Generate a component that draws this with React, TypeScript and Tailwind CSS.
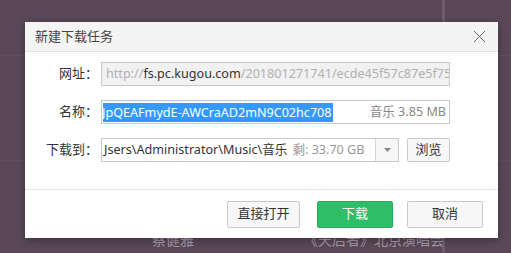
import { X } from 'lucide-react'

const font = { fontFamily: '"Noto Sans", "Noto Sans CJK SC", sans-serif' }

function Label({ text }: { text: string }) {
  return <div className="w-[73px] shrink-0 text-right text-[13px] text-[#333]">{text}</div>
}

export default function App() {
  return (
    <div className="relative w-[511px] h-[253px] overflow-hidden bg-[#5a4859]" style={font}>
      {/* app behind the dialog */}
      <div className="absolute left-0 top-[55px] w-full h-px bg-[#66546a]/60" />
      <div className="absolute left-0 top-[160px] w-full h-px bg-[#66546a]/60" />
      <div className="absolute left-[442px] top-0 w-[3px] h-full bg-[#6e5c6c]" />
      <div className="absolute left-[152px] top-[229px] text-[14px] text-[#a89ba6]">蔡健雅</div>
      <div className="absolute left-[304px] top-[229px] text-[14px] text-[#a89ba6]">《天后者》北京演唱会</div>

      {/* dialog */}
      <div className="absolute left-[25px] top-[22px] w-[473px] h-[216px] bg-white flex flex-col shadow-[0_2px_8px_rgba(0,0,0,0.35)]">
        <div className="h-[30px] shrink-0 bg-[#f4f4f4] border-b border-[#e3e3e3] flex items-center justify-between pl-[10px] pr-[8px]">
          <span className="text-[13px] text-[#444]">新建下载任务</span>
          <X size={21} strokeWidth={1} className="text-[#555]" />
        </div>

        <div className="flex-1 flex flex-col gap-[14px] pt-[10px]">
          <div className="flex items-center gap-[3px]">
            <Label text="网址：" />
            <div className="w-[349px] h-[24px] border border-[#c9c9c9] bg-[#f1f1f1] flex items-center pl-[4px] overflow-hidden whitespace-nowrap text-[12.6px]">
              <span className="text-[#b0b0b0]">http://</span>
              <span className="text-[#333]">fs.pc.kugou.com</span>
              <span className="text-[#b0b0b0]">/201801271741/ecde45f57c87e5f75‹</span>
            </div>
          </div>

          <div className="flex items-center gap-[3px]">
            <Label text="名称：" />
            <div className="w-[349px] h-[24px] border border-[#c9c9c9] bg-white flex items-center justify-between pl-[1px] pr-[3px] overflow-hidden whitespace-nowrap text-[12.6px]">
              <div className="overflow-hidden">
                <span className="block -ml-[2px] bg-[#3399ff] text-white leading-[19px] px-[1px]">JpQEAFmydE-AWCraAD2mN9C02hc708</span>
              </div>
              <span className="text-[#888]">音乐 3.85 MB</span>
            </div>
          </div>

          <div className="flex items-center gap-[3px]">
            <Label text="下载到：" />
            <div className="w-[298px] h-[24px] border border-[#c9c9c9] bg-white flex items-stretch overflow-hidden whitespace-nowrap text-[12.6px]">
              <div className="flex-1 flex items-center overflow-hidden pl-[3px]">
                <span className="-ml-[1px] text-[#333]">Jsers\Administrator\Music\音乐</span>
                <span className="ml-[5px] text-[#999]">剩: 33.70 GB</span>
              </div>
              <div className="w-[23px] shrink-0 border-l border-[#d6d6d6] bg-[#f6f6f6] flex items-center justify-center">
                <svg width="7" height="4" viewBox="0 0 7 4">
                  <path d="M0 0 H7 L3.5 4 Z" fill="#888" />
                </svg>
              </div>
            </div>
            <button className="ml-[5px] w-[43px] h-[24px] border border-[#c9c9c9] bg-[#f7f7f7] rounded-[2px] text-[13px] text-[#333]">浏览</button>
          </div>
        </div>

        <div className="h-[49px] shrink-0 border-t border-[#e6e6e6] flex items-center justify-end pr-[15px]">
          <button className="w-[73px] h-[27px] border border-[#c9c9c9] bg-[#f7f7f7] rounded-[2px] text-[13px] text-[#333]">直接打开</button>
          <button className="ml-[17px] w-[76px] h-[27px] border border-[#28ad5d] bg-[#2fbd68] rounded-[2px] text-[13px] text-white">下载</button>
          <button className="ml-[14px] w-[76px] h-[27px] border border-[#c9c9c9] bg-[#f7f7f7] rounded-[2px] text-[13px] text-[#333]">取消</button>
        </div>
      </div>
    </div>
  )
}
